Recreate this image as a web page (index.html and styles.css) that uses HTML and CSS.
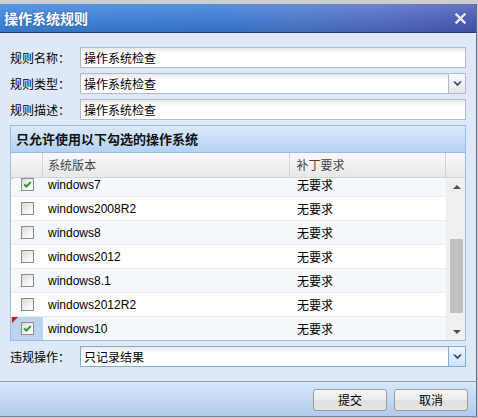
FILE: index.html
```html
<!DOCTYPE html>
<html>
<head>
<meta charset="utf-8">
<link rel="stylesheet" href="styles.css">
</head>
<body>
<div class="win">
  <div class="titlebar">
    <span class="title">操作系统规则</span>
    <svg class="close" width="11" height="11" viewBox="0 0 11 11"><path d="M1.5 1.5 L9.5 9.5 M9.5 1.5 L1.5 9.5" stroke="#e8eef8" stroke-width="2.4" stroke-linecap="square"/></svg>
  </div>
  <div class="body">
    <div class="field">
      <span class="label">规则名称：</span>
      <div class="input"><span class="val">操作系统检查</span></div>
    </div>
    <div class="field">
      <span class="label">规则类型：</span>
      <div class="input combo"><span class="val">操作系统检查</span><span class="trigger"><svg width="9" height="6" viewBox="0 0 9 6"><polygon points="0,0.5 2.2,0.5 4.5,2.8 6.8,0.5 9,0.5 4.5,5.2" fill="#2b4a84"/></svg></span></div>
    </div>
    <div class="field">
      <span class="label">规则描述：</span>
      <div class="input"><span class="val">操作系统检查</span></div>
    </div>
    <div class="grid">
      <div class="grid-title">只允许使用以下勾选的操作系统</div>
      <div class="grid-head">
        <div class="h-chk"></div>
        <div class="h-ver">系统版本</div>
        <div class="h-patch">补丁要求</div>
        <div class="h-sb"></div>
      </div>
      <div class="grid-body">
        <div class="rows">
          <div class="rows-inner">
            <div class="row alt"><div class="c-chk dirty"><span class="cb on"><svg width="11" height="11" viewBox="0 0 11 11"><path d="M2.3 5.4 L4.4 7.6 L8.6 3.2" stroke="#1f9a1f" stroke-width="1.9" fill="none"/></svg></span></div><div class="c-ver">windows7</div><div class="c-patch">无要求</div></div>
            <div class="row"><div class="c-chk"><span class="cb"></span></div><div class="c-ver">windows2008R2</div><div class="c-patch">无要求</div></div>
            <div class="row alt"><div class="c-chk"><span class="cb"></span></div><div class="c-ver">windows8</div><div class="c-patch">无要求</div></div>
            <div class="row"><div class="c-chk"><span class="cb"></span></div><div class="c-ver">windows2012</div><div class="c-patch">无要求</div></div>
            <div class="row alt"><div class="c-chk"><span class="cb"></span></div><div class="c-ver">windows8.1</div><div class="c-patch">无要求</div></div>
            <div class="row"><div class="c-chk"><span class="cb"></span></div><div class="c-ver">windows2012R2</div><div class="c-patch">无要求</div></div>
            <div class="row alt"><div class="c-chk dirty sel"><span class="cb on"><svg width="11" height="11" viewBox="0 0 11 11"><path d="M2.3 5.4 L4.4 7.6 L8.6 3.2" stroke="#1f9a1f" stroke-width="1.9" fill="none"/></svg></span></div><div class="c-ver">windows10</div><div class="c-patch">无要求</div></div>
          </div>
        </div>
        <div class="scrollbar">
          <span class="arrow"><span class="tri-up"></span></span>
          <div class="thumb"></div>
          <span class="spacer"></span>
          <span class="arrow"><span class="tri-down"></span></span>
        </div>
      </div>
    </div>
    <div class="field">
      <span class="label">违规操作：</span>
      <div class="input combo focus"><span class="val">只记录结果</span><span class="trigger"><svg width="9" height="6" viewBox="0 0 9 6"><polygon points="0,0.5 2.2,0.5 4.5,2.8 6.8,0.5 9,0.5 4.5,5.2" fill="#2b4a84"/></svg></span></div>
    </div>
  </div>
  <div class="footer">
    <button class="btn">提交</button>
    <button class="btn">取消</button>
  </div>
</div>
</body>
</html>
```
FILE: styles.css
```css
* { box-sizing: border-box; }
html, body { margin: 0; padding: 0; }
body {
  width: 478px;
  height: 418px;
  overflow: hidden;
  background: #cdcdcd;
  font-family: "Liberation Sans", "Noto Sans CJK SC", sans-serif;
  font-size: 12px;
  color: #000;
}
.win {
  margin-top: 4px;
  width: 477px;
  height: 413px;
  border-right: 1px solid #5f6f92;
  border-bottom: 1px solid #7784a3;
  background: #dfe8f6;
  display: flex;
  flex-direction: column;
}
.titlebar {
  flex: none;
  height: 29px;
  border-bottom: 1px solid #213c70;
  display: flex;
  align-items: center;
  justify-content: space-between;
  padding: 0 10px 0 4px;
  background:
    linear-gradient(to bottom, rgba(255,255,255,0.16), rgba(255,255,255,0.04) 50%, rgba(0,0,0,0.10)),
    linear-gradient(to right, #3b84da 0%, #3a7bd3 45%, #4a78cc 62%, #5169c2 82%, #4858b3 100%);
}
.title {
  color: #fff;
  font-family: "Noto Sans CJK SC", sans-serif;
  font-weight: bold;
  font-size: 14px;
  line-height: 28px;
  text-shadow: 0 0 2px rgba(0, 20, 60, 0.45);
}
.close { display: block; margin-top: 1px; }
.body {
  flex: none;
  height: 348px;
  padding: 14px 10px 0 10px;
}
.field {
  display: flex;
  align-items: center;
  height: 21px;
  margin-bottom: 5px;
}
.label {
  width: 70px;
  flex: none;
  font-family: "Noto Sans CJK SC", sans-serif;
  line-height: 21px;
}
.input {
  flex: 1;
  height: 21px;
  border: 1px solid #b5b8c8;
  background: linear-gradient(to bottom, #e9e9e9, #ffffff 6px);
  display: flex;
  align-items: center;
  padding-left: 3px;
  font-family: "Noto Sans CJK SC", sans-serif;
}
.input .val { flex: 1; line-height: 19px; }
.combo { padding-right: 0; }
.trigger {
  width: 17px;
  height: 19px;
  flex: none;
  border-left: 1px solid #b5b8c8;
  background: linear-gradient(to bottom, #fafafa, #e6e6e6);
  display: flex;
  align-items: center;
  justify-content: center;
}
.trigger svg { display: block; }
.combo.focus { border-color: #7eadd9; }
.combo.focus .trigger {
  border-left-color: #7eadd9;
  background: linear-gradient(to bottom, #eef5fd, #cfe1f6);
}
.grid {
  height: 216px;
  border: 1px solid #99bbe8;
  margin-bottom: 5px;
  background: #fff;
  display: flex;
  flex-direction: column;
}
.grid-title {
  flex: none;
  height: 27px;
  border-bottom: 1px solid #99bbe8;
  padding-left: 5px;
  line-height: 26px;
  font-family: "Noto Sans CJK SC", sans-serif;
  font-weight: bold;
  font-size: 13px;
  color: #111;
  background: linear-gradient(to bottom, #dce9fa, #b3d2f5);
}
.grid-head {
  flex: none;
  height: 25px;
  border-bottom: 1px solid #d3d3d3;
  display: flex;
  background: linear-gradient(to bottom, #f9f9f9, #e8e8e8);
  color: #444;
  font-family: "Noto Sans CJK SC", sans-serif;
  line-height: 24px;
}
.h-chk { width: 32px; border-right: 1px solid #d3d3d3; }
.h-ver { width: 248px; border-right: 1px solid #d3d3d3; padding-left: 5px; }
.h-patch { width: 156px; border-right: 1px solid #d3d3d3; padding-left: 6px; }
.h-sb { width: 19px; }
.grid-body {
  flex: none;
  height: 162px;
  display: flex;
  overflow: hidden;
}
.rows { width: 436px; flex: none; overflow: hidden; }
.rows-inner { margin-top: -5px; }
.row {
  height: 24px;
  border-bottom: 1px solid #ececec;
  display: flex;
  align-items: center;
  background: #fff;
}
.row.alt { background: #f5f8fc; }
.c-chk {
  width: 32px;
  height: 23px;
  flex: none;
  display: flex;
  align-items: center;
  justify-content: center;
  position: relative;
}
.c-chk.sel { background: #bed3ef; }
.c-chk.dirty::before {
  content: "";
  position: absolute;
  left: 1px;
  top: 0;
  border-top: 6px solid #d01515;
  border-right: 6px solid transparent;
}
.cb {
  width: 13px;
  height: 13px;
  border: 1px solid #8c8c8c;
  background: linear-gradient(135deg, #d9d9d9, #f4f4f4 60%, #ffffff);
  display: flex;
  align-items: center;
  justify-content: center;
}
.cb svg { display: block; }
.c-ver { width: 248px; flex: none; padding-left: 5px; }
.c-patch {
  width: 156px;
  flex: none;
  height: 23px;
  line-height: 23px;
  padding-left: 6px;
  border-right: 1px solid #ececec;
  font-family: "Noto Sans CJK SC", sans-serif;
}
.scrollbar {
  width: 19px;
  flex: none;
  background: #f0f0f0;
  display: flex;
  flex-direction: column;
  align-items: center;
}
.arrow {
  height: 17px;
  width: 100%;
  display: flex;
  align-items: center;
  justify-content: center;
}
.tri-up {
  border-left: 4px solid transparent;
  border-right: 4px solid transparent;
  border-bottom: 4px solid #505050;
}
.tri-down {
  border-left: 4px solid transparent;
  border-right: 4px solid transparent;
  border-top: 4px solid #505050;
}
.thumb {
  width: 13px;
  height: 74px;
  margin-top: 44px;
  background: #c1c1c1;
}
.spacer { flex: 1; }
.footer {
  flex: none;
  height: 35px;
  border-top: 1px solid #8d9bb6;
  background: linear-gradient(to bottom, #d6e7fb, #b2cbed);
  display: flex;
  justify-content: flex-end;
  gap: 7px;
  padding: 7px 8px 0 0;
}
.btn {
  width: 74px;
  height: 22px;
  border: 1px solid #9c9c9c;
  border-radius: 3px;
  background: linear-gradient(to bottom, #f6f6f6 0%, #ededed 45%, #e0e0e0 55%, #e6e6e6 100%);
  font-family: "Noto Sans CJK SC", sans-serif;
  font-size: 12px;
  color: #000;
  padding: 0;
  line-height: 20px;
}
```
